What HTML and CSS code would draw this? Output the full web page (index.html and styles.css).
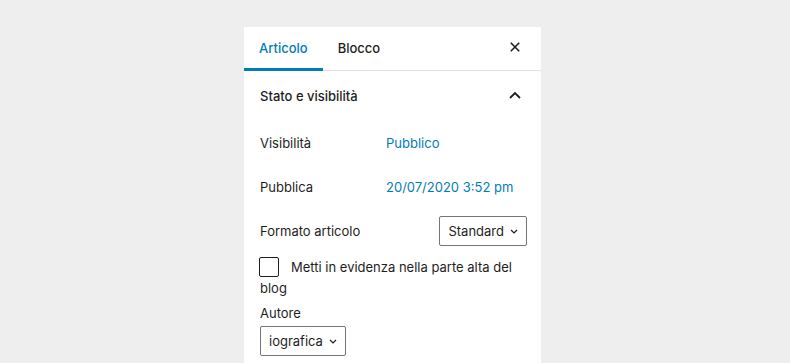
FILE: index.html
```html
<!DOCTYPE html>
<html lang="it">
<head>
<meta charset="utf-8">
<link rel="stylesheet" href="styles.css">
</head>
<body>
<div class="panel">
  <div class="tabs">
    <div class="tab active">Articolo</div>
    <div class="tab">Blocco</div>
    <div class="close">
      <svg width="24" height="24" viewBox="0 0 24 24"><path d="M7.8 7.8l8.4 8.4M16.2 7.8l-8.4 8.4" stroke="#1e1e1e" stroke-width="1.6" fill="none"/></svg>
    </div>
  </div>
  <div class="section">
    <div class="section-title">
      <span>Stato e visibilità</span>
      <svg width="24" height="24" viewBox="0 0 24 24"><path d="M7 14l5-5 5 5" stroke="#1e1e1e" stroke-width="1.8" fill="none"/></svg>
    </div>
    <div class="row"><span class="label">Visibilità</span><span class="value">Pubblico</span></div>
    <div class="row"><span class="label">Pubblica</span><span class="value">20/07/2020 3:52 pm</span></div>
    <div class="row row-select">
      <span class="label">Formato articolo</span>
      <div class="select">Standard<svg width="8" height="10" viewBox="0 0 8 10"><path d="M1 4l3 3 3-3" stroke="#1e1e1e" stroke-width="1.2" fill="none"/></svg></div>
    </div>
    <div class="check">
      <span class="box"></span>
      <span class="check-text">Metti in evidenza nella parte alta del blog</span>
    </div>
    <div class="author-label">Autore</div>
    <div class="select author">iografica<svg width="8" height="10" viewBox="0 0 8 10"><path d="M1 4l3 3 3-3" stroke="#1e1e1e" stroke-width="1.2" fill="none"/></svg></div>
  </div>
</div>
</body>
</html>
```
FILE: styles.css
```css
html, body { margin: 0; padding: 0; }
body {
  background: #eeeeee;
  font-family: Inter, "Noto Sans", sans-serif;
  font-size: 13px;
  color: #1e1e1e;
  width: 790px;
  height: 363px;
  overflow: hidden;
}
.panel {
  margin: 27px 0 0 244px;
  width: 297px;
  height: 340px;
  background: #fff;
}
.tabs {
  display: flex;
  align-items: stretch;
  height: 43px;
  border-bottom: 1px solid #e0e0e0;
}
.tab {
  padding: 0 15px;
  display: flex;
  align-items: center;
  font-weight: 500;
  padding-top: 1px;
  border-bottom: 3px solid transparent;
  margin-bottom: -1px;
}
.tab.active {
  color: #007cba;
  border-bottom-color: #007cba;
}
.close {
  margin-left: auto;
  display: flex;
  align-items: center;
  padding-right: 14px;
  padding-bottom: 3px;
}
.section { padding: 0 16px; }
.section-title {
  height: 50px;
  display: flex;
  align-items: center;
  justify-content: space-between;
  font-weight: 500;
  margin-right: -2px;
}
.row {
  display: grid;
  grid-template-columns: 126px 1fr;
  align-items: center;
  height: 44px;
}
.value { color: #007cba; }
.row-select {
  grid-template-columns: 1fr auto;
  margin-right: -2px;
}
.select {
  display: inline-flex;
  align-items: center;
  gap: 6px;
  height: 28px;
  padding: 0 8px;
  border: 1px solid #757575;
  border-radius: 2px;
  font-size: 13px;
}
.check {
  margin-top: 4px;
  line-height: 21px;
}
.box {
  float: left;
  width: 18px;
  height: 18px;
  border: 1px solid #1e1e1e;
  border-radius: 2px;
  margin: 0 12px 0 -1px;
}
.author-label { margin-top: 4px; line-height: 20px; }
.author { margin-top: 3px; }
```
